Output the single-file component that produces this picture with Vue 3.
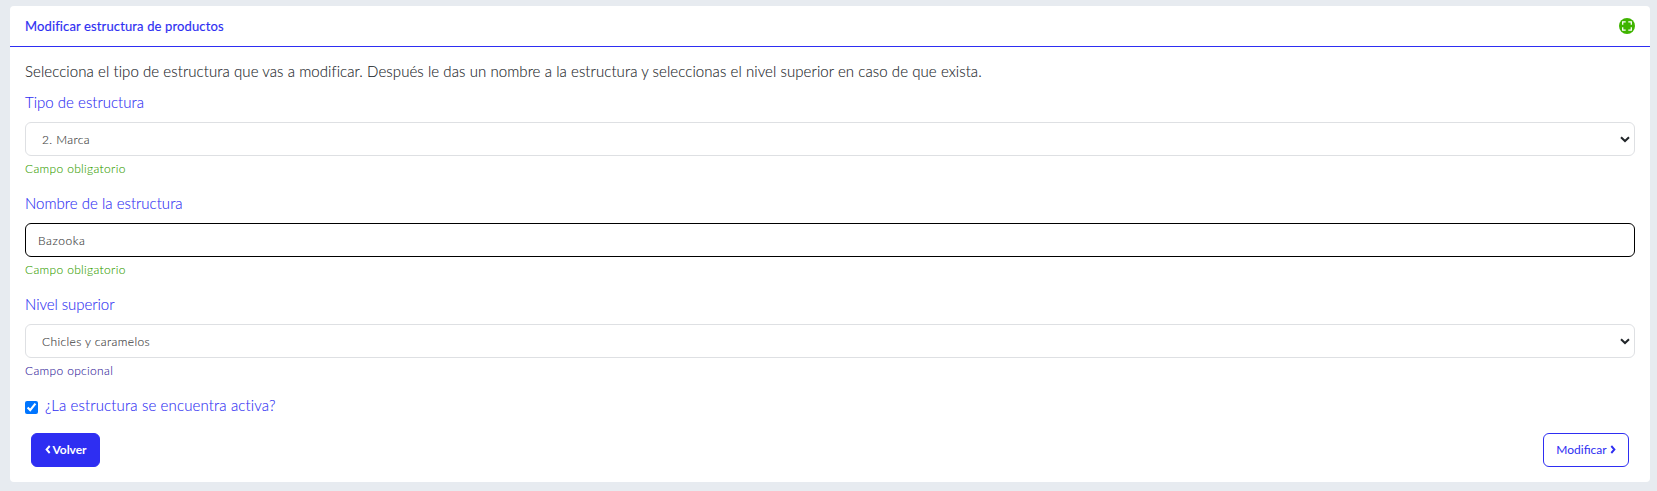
<script setup>
import { ref } from 'vue'

const type = ref('2. Marca')
const name = ref('Bazooka')
const parent = ref('Chicles y caramelos')
const active = ref(true)
</script>

<template>
  <main class="page">
    <section class="card">
      <header class="head">
        <h1 class="title">Modificar estructura de productos</h1>
        <svg class="expand" width="16" height="16" viewBox="0 0 16 16">
          <circle cx="8" cy="8" r="8" fill="#3fb400" />
          <path d="M3.7 6.7V3.9H6.7M9.3 3.9h3V6.7M12.3 9.3v2.9h-3M6.7 12.2h-3V9.3" fill="none" stroke="#fff" stroke-width="1.3" />
        </svg>
      </header>

      <form class="body" @submit.prevent>
        <p class="intro">Selecciona el tipo de estructura que vas a modificar. Después le das un nombre a la estructura y seleccionas el nivel superior en caso de que exista.</p>

        <div class="field">
          <label class="label" for="type">Tipo de estructura</label>
          <div class="select-wrap">
            <select id="type" v-model="type" class="control select">
              <option>2. Marca</option>
            </select>
            <svg class="chevron" width="10" height="7" viewBox="0 0 10 7"><path d="M1 1.2l4 3.8 4-3.8" /></svg>
          </div>
          <small class="help">Campo obligatorio</small>
        </div>

        <div class="field">
          <label class="label" for="name">Nombre de la estructura</label>
          <input id="name" v-model="name" class="control input" type="text" />
          <small class="help">Campo obligatorio</small>
        </div>

        <div class="field">
          <label class="label narrow" for="parent">Nivel superior</label>
          <div class="select-wrap">
            <select id="parent" v-model="parent" class="control select">
              <option>Chicles y caramelos</option>
            </select>
            <svg class="chevron" width="10" height="7" viewBox="0 0 10 7"><path d="M1 1.2l4 3.8 4-3.8" /></svg>
          </div>
          <small class="help optional">Campo opcional</small>
        </div>

        <div class="check">
          <input id="active" v-model="active" class="box" type="checkbox" />
          <label class="label wide" for="active">¿La estructura se encuentra activa?</label>
        </div>

        <div class="actions">
          <button class="btn back" type="button">
            <svg width="6" height="9" viewBox="0 0 6 9"><path d="M4.7 1L1.6 4.5l3.1 3.5" /></svg>
            <span>Volver</span>
          </button>
          <button class="btn save" type="submit">
            <span>Modificar</span>
            <svg width="6" height="9" viewBox="0 0 6 9"><path d="M1.3 1l3.1 3.5L1.3 8" /></svg>
          </button>
        </div>
      </form>
    </section>
  </main>
</template>

<style>
body {
  background: #e7ebf0;
}
</style>

<style scoped>
* {
  box-sizing: border-box;
}
.page {
  height: 491px;
  padding: 6px 7px 9px 10px;
  background: #e7ebf0;
  font-family: Lato, "Open Sans", sans-serif;
  font-weight: 300;
}
.card {
  height: 476px;
  border-radius: 4px;
  background: #fff;
}
.head {
  display: flex;
  align-items: center;
  justify-content: space-between;
  height: 41px;
  padding: 0 15px 1px;
  border-bottom: 1px solid #2e2ef2;
}
.title {
  margin: 1px 0 0;
  color: #2e2ef2;
  font-size: 13px;
  line-height: 20px;
  font-weight: 400;
  letter-spacing: 0.13px;
  -webkit-text-stroke: 0.15px #2e2ef2;
}
.expand {
  margin-top: 1px;
}
.body {
  padding: 13px 15px 0;
}
.intro {
  margin: 0 0 9px;
  color: #212529;
  font-size: 15px;
  line-height: 22px;
  letter-spacing: 0.073px;
  -webkit-text-stroke: 0.1px #212529;
}
.field {
  height: 101px;
}
.label {
  display: block;
  height: 31px;
  color: #2e2ef2;
  font-size: 15px;
  line-height: 22px;
  letter-spacing: 0.02px;
  -webkit-text-stroke: 0.1px #2e2ef2;
}
.narrow {
  letter-spacing: -0.05px;
}
.wide {
  height: 22px;
  letter-spacing: 0.14px;
}
.select-wrap {
  position: relative;
}
.control {
  display: block;
  width: 100%;
  height: 34px;
  margin: 0;
  border: 1px solid #dee0e3;
  border-radius: 6px;
  outline: none;
  background: #fff;
  color: #3c3c3c;
  font: 300 12px Lato, "Open Sans", sans-serif;
  letter-spacing: 0.38px;
  -webkit-text-stroke: 0.12px #3c3c3c;
}
.select {
  appearance: none;
  padding: 1px 30px 0 16px;
}
.input {
  padding: 1px 12px 0;
  border-color: #000;
  letter-spacing: 0.58px;
}
.chevron {
  position: absolute;
  top: 14px;
  right: 5px;
}
.chevron path {
  fill: none;
  stroke: #212529;
  stroke-width: 2;
}
.help {
  display: block;
  margin-top: 4px;
  color: #35a000;
  font-size: 12px;
  line-height: 18px;
  letter-spacing: 0.33px;
  -webkit-text-stroke: 0.08px #35a000;
}
.optional {
  color: #32219a;
  -webkit-text-stroke-color: #32219a;
}
.check {
  display: flex;
  align-items: flex-start;
  gap: 7px;
  height: 39px;
}
.box {
  width: 13px;
  height: 13px;
  margin: 7px 0 0;
  accent-color: #0075ff;
}
.actions {
  display: flex;
  justify-content: space-between;
  padding: 0 6px;
}
.btn {
  display: flex;
  align-items: center;
  justify-content: center;
  height: 34px;
  padding: 0 0 1px;
  border: 1px solid #2e2ef2;
  border-radius: 6px;
  font: 400 12px Lato, "Open Sans", sans-serif;
}
.btn path {
  fill: none;
  stroke: currentColor;
  stroke-width: 1.9;
}
.back {
  gap: 2px;
  width: 69px;
  background: #2e2ef2;
  color: #fff;
  font-weight: 700;
  letter-spacing: -0.05px;
}
.save {
  gap: 3px;
  width: 86px;
  background: #fff;
  color: #2e2ef2;
}
</style>
